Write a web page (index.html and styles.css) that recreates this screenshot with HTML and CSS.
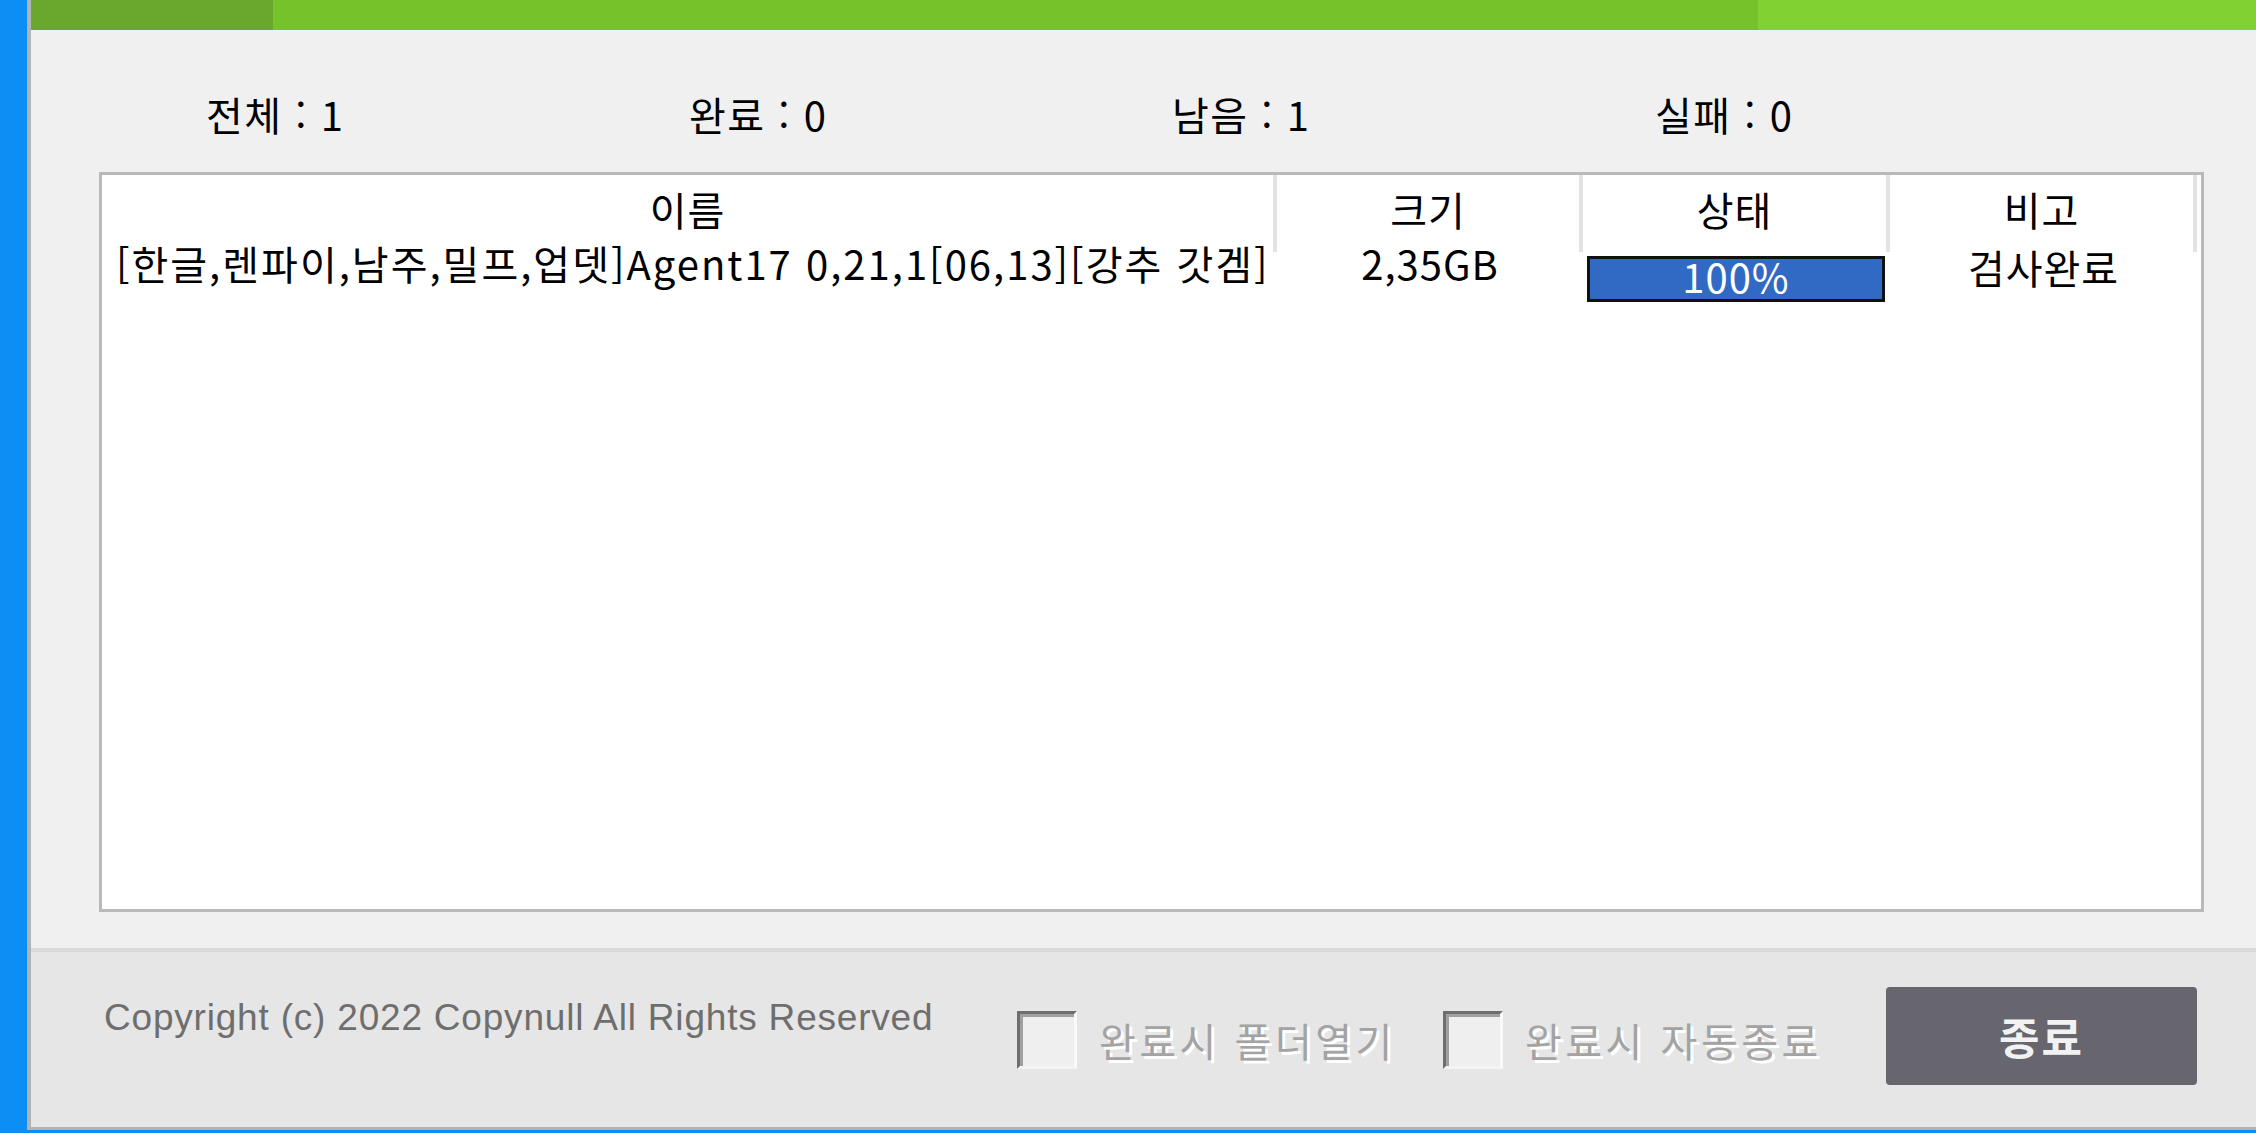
FILE: index.html
```html
<!DOCTYPE html>
<html lang="ko">
<head>
    <meta charset="UTF-8">
    <meta name="viewport" content="width=device-width, initial-scale=1.0">
    <title>파일 검사</title>
    <link rel="stylesheet" href="styles.css">
</head>
<body>
    <div class="window">
        <div class="top-bar">
            <span class="seg seg-dark"></span>
            <span class="seg seg-mid"></span>
            <span class="seg seg-light"></span>
        </div>
        <div class="main">
            <div class="stats">
                <span>전체 : 1</span>
                <span>완료 : 0</span>
                <span>남음 : 1</span>
                <span>실패 : 0</span>
            </div>
            <div class="list">
                <div class="list-head">
                    <div class="col">이름</div>
                    <div class="col">크기</div>
                    <div class="col">상태</div>
                    <div class="col">비고</div>
                </div>
                <div class="list-row">
                    <div class="cell name">[한글,렌파이,남주,밀프,업뎃]Agent17 0,21,1[06,13][강추 갓겜]</div>
                    <div class="cell">2,35GB</div>
                    <div class="cell status"><div class="bar">100%</div></div>
                    <div class="cell remark">검사완료</div>
                </div>
            </div>
        </div>
        <div class="footer">
            <div class="copyright">Copyright (c) 2022 Copynull All Rights Reserved</div>
            <label class="option">
                <span class="check"></span>
                <span class="option-text">완료시 폴더열기</span>
            </label>
            <label class="option">
                <span class="check"></span>
                <span class="option-text">완료시 자동종료</span>
            </label>
            <button class="close-btn">종료</button>
        </div>
    </div>
</body>
</html>
```

FILE: styles.css
```css
body {
    margin: 0;
    height: 1133px;
    overflow: hidden;
    background-color: #0d8ef4;
    font-family: "Noto Sans CJK KR", "Noto Sans", sans-serif;
}
.window {
    margin-left: 27px;
    height: 1130px;
    box-sizing: border-box;
    border-left: 4px solid #b3b3b3;
    border-bottom: 3px solid #b3b3b3;
    background: #f0f0f0;
    display: flex;
    flex-direction: column;
}
.top-bar {
    display: flex;
    height: 30px;
}
.seg-dark {
    width: 242px;
    background-color: #6aa82d;
}
.seg-mid {
    width: 1485px;
    background-color: #76c22a;
}
.seg-light {
    flex: 1;
    background-color: #80d131;
}
.main {
    flex: 1;
}
.stats {
    display: grid;
    grid-template-columns: repeat(4, 483px);
    padding-left: 175px;
    margin-top: 55px;
    font-size: 40px;
    line-height: 58px;
    letter-spacing: 1.5px;
    color: #000;
}
.list {
    margin: 29px 0 0 68px;
    width: 2105px;
    height: 740px;
    box-sizing: border-box;
    border: 3px solid #b9b9b9;
    background: #fff;
    font-size: 40px;
    letter-spacing: 1px;
}
.list-head, .list-row {
    display: grid;
    grid-template-columns: 1175px 306px 307px 307px;
}
.list-head {
    height: 77px;
}
.col {
    border-right: 4px solid #e3e3e3;
    text-align: center;
    line-height: 69px;
}
.list-row {
    margin-top: -18px;
    height: 70px;
}
.cell {
    text-align: center;
    line-height: 58px;
    white-space: nowrap;
}
.name {
    text-align: left;
    padding-left: 14px;
    letter-spacing: 2px;
}
.status {
    padding: 22px 0 0 4px;
}
.bar {
    width: 298px;
    height: 46px;
    box-sizing: border-box;
    border: 3px solid #111;
    background-color: #316ac5;
    color: #fff;
    line-height: 34px;
}
.remark {
    padding-top: 4px;
}
.footer {
    height: 179px;
    box-sizing: border-box;
    border-top: 4px solid #dadada;
    background: #e6e6e6;
    display: grid;
    grid-template-columns: 913px 426px 443px 311px;
    padding-left: 73px;
    align-items: start;
}
.copyright {
    margin-top: 44px;
    font-family: "Liberation Sans", Arial, sans-serif;
    font-size: 37px;
    line-height: 44px;
    letter-spacing: 0.8px;
    color: #6e6e6e;
}
.option {
    display: flex;
    align-items: center;
    gap: 22px;
    margin-top: 59px;
}
.check {
    width: 60px;
    height: 58px;
    box-sizing: border-box;
    border: 3px solid #6e6e6e;
    border-right-color: #fafafa;
    border-bottom-color: #f4f4f4;
    background: #efefef;
    box-shadow: inset 3px 3px 0 #a0a0a0;
}
.option-text {
    font-size: 40px;
    line-height: 58px;
    color: #a3a3a3;
    letter-spacing: 3.5px;
    text-shadow: 3px 3px 0 #fff;
}
.close-btn {
    margin-top: 35px;
    width: 311px;
    height: 98px;
    border: none;
    border-radius: 4px;
    background-color: #67666f;
    color: #f2f2f2;
    font-family: "Noto Sans CJK KR", sans-serif;
    font-size: 44px;
    font-weight: bold;
    letter-spacing: 2px;
}
```
